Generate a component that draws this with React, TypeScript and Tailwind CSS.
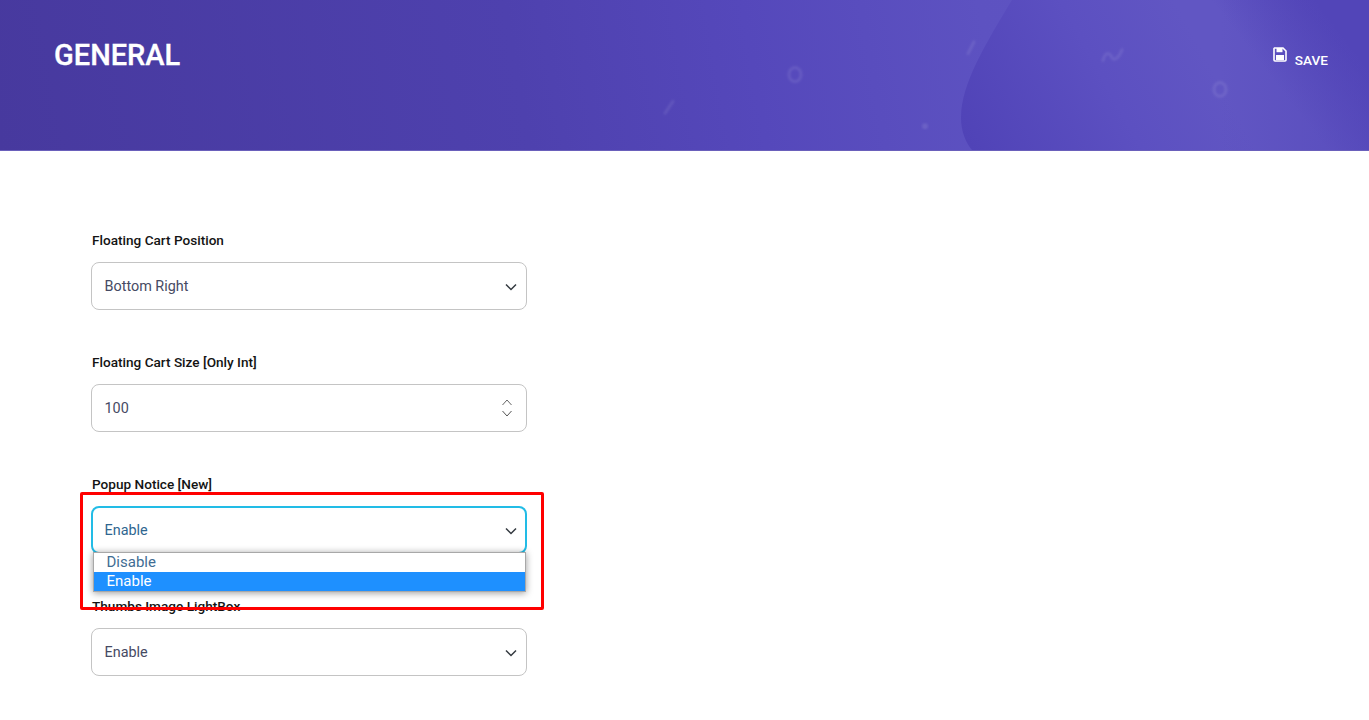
import React from "react";

function Chevron() {
  return (
    <svg width="12" height="8" viewBox="0 0 12 8" fill="none" className="shrink-0 mt-[2px]">
      <path d="M1 1.5 L6 6.5 L11 1.5" stroke="#343a40" strokeWidth="1.5" />
    </svg>
  );
}

function Spinner() {
  return (
    <svg width="12" height="20" viewBox="0 0 12 20" fill="none" className="shrink-0 mr-[4px]">
      <path d="M1.5 7 L6 2 L10.5 7" stroke="#666" strokeWidth="1" />
      <path d="M1.5 13 L6 18 L10.5 13" stroke="#555" strokeWidth="1" />
    </svg>
  );
}

function Field({
  label,
  value,
  icon,
  focused,
  children,
}: {
  label: string;
  value: string;
  icon: React.ReactNode;
  focused?: boolean;
  children?: React.ReactNode;
}) {
  return (
    <div className="relative w-[436px] h-[122px]">
      <div className="h-[33px] text-[13.6px] leading-[22px] font-medium text-[#141414] pl-[1px]">{label}</div>
      <div
        className={
          focused
            ? "h-[48px] rounded-[8px] border-2 border-[#22bce6] bg-white flex items-center justify-between pl-[11.5px] pr-[8px] text-[14.4px] text-[#2f6690]"
            : "h-[48px] rounded-[8px] border border-[#c4c4c4] bg-white flex items-center justify-between pl-[12.5px] pr-[9px] text-[14.4px] text-[#464a63]"
        }
      >
        <span className="pt-[2px]">{value}</span>
        {icon}
      </div>
      {children}
    </div>
  );
}

function HeaderArt() {
  return (
    <svg className="absolute inset-0 w-full h-full" viewBox="0 0 1369 151" preserveAspectRatio="none" fill="none">
      <defs>
        <linearGradient id="blob" x1="960" y1="130" x2="1180" y2="10" gradientUnits="userSpaceOnUse">
          <stop offset="0" stopColor="#5043b7" />
          <stop offset="0.6" stopColor="#5c50c1" />
          <stop offset="1" stopColor="#6156c3" />
        </linearGradient>
        <linearGradient id="edge" x1="1265" y1="70" x2="1330" y2="20" gradientUnits="userSpaceOnUse">
          <stop offset="0" stopColor="#5245b8" stopOpacity="0" />
          <stop offset="1" stopColor="#5245b8" stopOpacity="1" />
        </linearGradient>
        <linearGradient id="fade" x1="1220" y1="0" x2="1369" y2="0" gradientUnits="userSpaceOnUse">
          <stop offset="0" stopColor="#5245b8" stopOpacity="0" />
          <stop offset="1" stopColor="#5245b8" stopOpacity="0.5" />
        </linearGradient>
        <filter id="soft">
          <feGaussianBlur stdDeviation="1" />
        </filter>
      </defs>
      <path d="M1012 0 C985 45 961 85 961 118 C961 133 966 144 972 151 L1369 151 L1369 0 Z" fill="url(#blob)" />
      <rect x="1100" y="0" width="269" height="151" fill="url(#edge)" />
      <rect x="1220" y="0" width="149" height="151" fill="url(#fade)" />
      <g filter="url(#soft)" stroke="#ffffff" strokeOpacity="0.09" strokeWidth="3" strokeLinecap="round">
        <ellipse cx="795" cy="75" rx="6" ry="7" />
        <ellipse cx="1220" cy="90" rx="6" ry="7" />
        <path d="M665 114 L673 102" />
        <path d="M968 54 L974 42" />
        <path d="M1103 61 C1106 50 1110 54 1112 58 C1114 62 1119 58 1122 50" />
      </g>
      <circle cx="925" cy="127" r="3" fill="#ffffff" fillOpacity="0.1" filter="url(#soft)" />
    </svg>
  );
}

export default function App() {
  return (
    <div className="relative min-h-[720px] h-[720px] overflow-hidden bg-white font-['Roboto',sans-serif]">
      <header className="relative h-[151px] border-b border-[#6a60bb] bg-[linear-gradient(80deg,#47399e_0%,#4e41ae_38%,#5548bb_55%,#5d52c1_72%,#5f55c2_85%,#5245b8_100%)]">
        <HeaderArt />
        <div className="relative flex justify-between pl-[54px] pr-[41px]">
          <h1 className="pt-[37px] text-[29px] leading-[36px] font-medium text-white [-webkit-text-stroke:0.3px_white]">GENERAL</h1>
          <div className="flex items-start gap-[8px] pt-[47px] text-white">
            <svg width="14" height="15" viewBox="0 0 14 15" fill="none">
              <path d="M1.5 1 H10 L13 4 V13 a1 1 0 0 1 -1 1 H2 a1 1 0 0 1 -1 -1 V1.5 Z" stroke="currentColor" strokeWidth="1.6" />
              <rect x="3.5" y="1" width="6" height="4.2" fill="currentColor" />
              <rect x="3" y="8" width="8" height="5" fill="currentColor" />
            </svg>
            <span className="text-[13.6px] leading-[26px] font-medium">SAVE</span>
          </div>
        </div>
      </header>

      <main className="pl-[91px] pt-[78px]">
        <Field label="Floating Cart Position" value="Bottom Right" icon={<Chevron />} />
        <Field label="Floating Cart Size [Only Int]" value="100" icon={<Spinner />} />
        <Field label="Popup Notice [New]" value="Enable" icon={<Chevron />} focused>
          <div className="absolute left-[2px] top-[79px] w-[433px] z-10 bg-white border border-[#a8a8a8] shadow-[0_1px_7px_rgba(0,0,0,0.4)] text-[15px] leading-[18px]">
            <div className="pl-[12.5px] pb-[1px] text-[#3f6d94]">Disable</div>
            <div className="pl-[12.5px] pb-[1px] bg-[#1e90ff] text-white">Enable</div>
          </div>
        </Field>
        <Field label="Thumbs Image LightBox" value="Enable" icon={<Chevron />} />
      </main>

      <div className="absolute left-[80px] top-[492px] w-[464px] h-[118px] border-[3px] border-[#ff0000] rounded-[2px] z-20" />
    </div>
  );
}
